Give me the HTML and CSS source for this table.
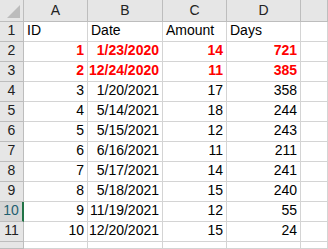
FILE: index.html
```html
<!DOCTYPE html>
<html>
<head>
<meta charset="utf-8">
<link rel="stylesheet" href="styles.css">
</head>
<body>
<div class="sheet">
  <div class="corner hdr"><span class="tri"></span></div>
  <div class="hdr col">A</div>
  <div class="hdr col">B</div>
  <div class="hdr col">C</div>
  <div class="hdr col">D</div>
  <div class="hdr col"></div>

  <div class="hdr rowh">1</div>
  <div class="cell">ID</div>
  <div class="cell">Date</div>
  <div class="cell">Amount</div>
  <div class="cell">Days</div>
  <div class="cell"></div>

  <div class="hdr rowh">2</div>
  <div class="cell num red">1</div>
  <div class="cell num red">1/23/2020</div>
  <div class="cell num red">14</div>
  <div class="cell num red">721</div>
  <div class="cell"></div>

  <div class="hdr rowh">3</div>
  <div class="cell num red">2</div>
  <div class="cell num red">12/24/2020</div>
  <div class="cell num red">11</div>
  <div class="cell num red">385</div>
  <div class="cell"></div>

  <div class="hdr rowh">4</div>
  <div class="cell num">3</div>
  <div class="cell num">1/20/2021</div>
  <div class="cell num">17</div>
  <div class="cell num">358</div>
  <div class="cell"></div>

  <div class="hdr rowh">5</div>
  <div class="cell num">4</div>
  <div class="cell num">5/14/2021</div>
  <div class="cell num">18</div>
  <div class="cell num">244</div>
  <div class="cell"></div>

  <div class="hdr rowh">6</div>
  <div class="cell num">5</div>
  <div class="cell num">5/15/2021</div>
  <div class="cell num">12</div>
  <div class="cell num">243</div>
  <div class="cell"></div>

  <div class="hdr rowh">7</div>
  <div class="cell num">6</div>
  <div class="cell num">6/16/2021</div>
  <div class="cell num">11</div>
  <div class="cell num">211</div>
  <div class="cell"></div>

  <div class="hdr rowh">8</div>
  <div class="cell num">7</div>
  <div class="cell num">5/17/2021</div>
  <div class="cell num">14</div>
  <div class="cell num">241</div>
  <div class="cell"></div>

  <div class="hdr rowh">9</div>
  <div class="cell num">8</div>
  <div class="cell num">5/18/2021</div>
  <div class="cell num">15</div>
  <div class="cell num">240</div>
  <div class="cell"></div>

  <div class="hdr rowh active">10</div>
  <div class="cell num">9</div>
  <div class="cell num">11/19/2021</div>
  <div class="cell num">12</div>
  <div class="cell num">55</div>
  <div class="cell"></div>

  <div class="hdr rowh">11</div>
  <div class="cell num">10</div>
  <div class="cell num">12/20/2021</div>
  <div class="cell num">15</div>
  <div class="cell num">24</div>
  <div class="cell"></div>

  <div class="hdr rowh"></div>
  <div class="cell"></div>
  <div class="cell"></div>
  <div class="cell"></div>
  <div class="cell"></div>
  <div class="cell"></div>
</div>
</body>
</html>
```

FILE: styles.css
```css
html, body {
  margin: 0;
  padding: 0;
  background: #ffffff;
  overflow: hidden;
}

.sheet {
  display: grid;
  grid-template-columns: 24px 64px 75px 64px 74px 1fr;
  grid-template-rows: 22px repeat(11, 20px) 7px;
  width: 328px;
  height: 249px;
  overflow: hidden;
  font-family: "Liberation Sans", Arial, sans-serif;
  font-size: 14px;
  color: #000000;
}

.sheet > div {
  box-sizing: border-box;
  border-right: 1px solid #d4d4d4;
  border-bottom: 1px solid #d4d4d4;
  display: flex;
  align-items: flex-end;
  padding: 0 3px 3px 3px;
  white-space: nowrap;
  overflow: hidden;
  line-height: 15px;
}

.hdr {
  background: #e6e6e6;
  color: #222222;
}

.sheet > .hdr {
  border-right-color: #bdbdbd;
  border-bottom-color: #bdbdbd;
}

.col {
  justify-content: center;
  align-items: center;
  padding: 2px 0 0 0;
}

.rowh {
  justify-content: center;
  padding: 0 0 3px 0;
}

.sheet > .active {
  border-right: 2px solid #217346;
  color: #1f5f70;
  background: #d6d6d6;
}

.corner {
  position: relative;
}

.tri {
  position: absolute;
  right: 3px;
  bottom: 3px;
  width: 0;
  height: 0;
  border-left: 13px solid transparent;
  border-bottom: 13px solid #bcbcbc;
}

.num {
  justify-content: flex-end;
}

.red {
  color: #ff0000;
  font-weight: bold;
}
```
